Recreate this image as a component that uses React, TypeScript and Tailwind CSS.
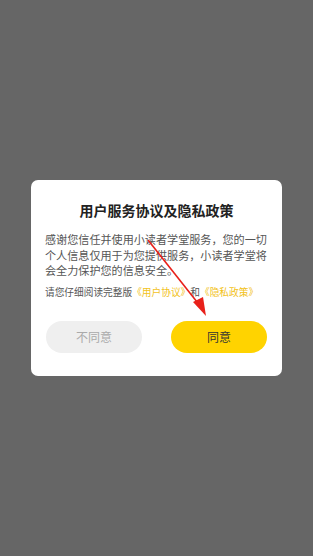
export default function App() {
  return (
    <div
      className="relative flex h-[556px] w-[313px] items-start justify-center bg-[#666666] pt-[180px]"
      style={{ fontFamily: '"Noto Sans CJK SC", "Noto Sans", sans-serif' }}
    >
      <div className="w-[251px] rounded-[7px] bg-white px-[14px] pb-[23px] pt-[18px]">
        <h2 className="text-center text-[14px] font-bold leading-[24px] text-[#222]">
          用户服务协议及隐私政策
        </h2>
        <p className="mt-[10px] text-[11.1px] leading-[15.5px] text-[#555]">
          感谢您信任并使用小读者学堂服务，您的一切个人信息仅用于为您提供服务，小读者学堂将会全力保护您的信息安全。
        </p>
        <p className="mt-[6px] whitespace-nowrap text-[9.7px] leading-[14px] text-[#555]">
          请您仔细阅读完整版<span className="text-[#f2c21a]">《用户协议》</span>和
          <span className="text-[#f2c21a]">《隐私政策》</span>
        </p>
        <div className="mt-[22px] flex justify-between px-px">
          <button className="h-[32px] w-[96px] rounded-full bg-[#efefef] text-[12px] text-[#aaa]">
            不同意
          </button>
          <button className="h-[32px] w-[96px] rounded-full bg-[#ffd300] text-[12px] text-[#333]">
            同意
          </button>
        </div>
      </div>
      <svg
        className="pointer-events-none absolute left-0 top-0"
        width="313"
        height="556"
        viewBox="0 0 313 556"
      >
        <line x1="148" y1="240" x2="201" y2="307" stroke="#e8201a" strokeWidth="1.6" />
        <polygon points="206,316 193,302 203,297" fill="#e8201a" />
      </svg>
    </div>
  );
}
